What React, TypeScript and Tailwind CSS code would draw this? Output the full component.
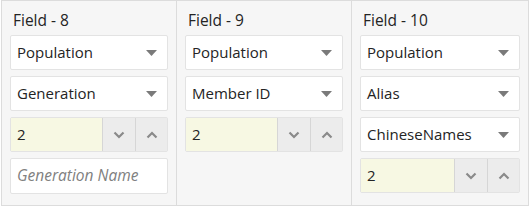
import { ReactNode } from 'react';

const font = { fontFamily: '"Open Sans", "Noto Sans", sans-serif' };

function Caret() {
  return (
    <svg width="11" height="6" viewBox="0 0 11 6" className="shrink-0">
      <path d="M0 0 L11 0 L5.5 6 Z" fill="#7a7a7a" />
    </svg>
  );
}

function Chevron({ up }: { up?: boolean }) {
  return (
    <svg width="12" height="8" viewBox="0 0 12 8">
      <path
        d={up ? 'M1.5 6.5 L6 2 L10.5 6.5' : 'M1.5 1.5 L6 6 L10.5 1.5'}
        fill="none"
        stroke="#8a8a8a"
        strokeWidth="2.2"
      />
    </svg>
  );
}

function Select({ value }: { value: string }) {
  return (
    <div className="h-[35px] flex items-center justify-between bg-white border border-[#e3e3e3] rounded-[2px] pl-[6px] pr-[10px] text-[15px] text-[#242424]">
      <span>{value}</span>
      <Caret />
    </div>
  );
}

function NumberInput({ value }: { value: string }) {
  return (
    <div className="h-[35px] flex border border-[#e3e3e3] rounded-[2px] text-[15px] text-[#242424]">
      <div className="flex-1 flex items-center pl-[6px] bg-[#f7f8e3]">{value}</div>
      <div className="w-[33px] flex items-center justify-center bg-[#ececec] border-l border-[#d6d6d6]">
        <Chevron />
      </div>
      <div className="w-[32px] flex items-center justify-center bg-[#ececec] border-l border-[#d6d6d6]">
        <Chevron up />
      </div>
    </div>
  );
}

function TextInput({ placeholder }: { placeholder: string }) {
  return (
    <div className="h-[36px] flex items-center bg-white border border-[#e3e3e3] rounded-[2px] pl-[6px] text-[15.5px] italic text-[#808080]">
      {placeholder}
    </div>
  );
}

function Column({ title, children, last }: { title: string; children: ReactNode; last?: boolean }) {
  return (
    <div className={`flex flex-col pl-[8px] pr-[8px] ${last ? '' : 'border-r border-[#dcdcdc]'}`}>
      <div className="h-[34px] pt-[9px] pl-[3px] text-[15.5px] text-[#242424] leading-[20px]">{title}</div>
      <div className="flex flex-col gap-[6px]">{children}</div>
    </div>
  );
}

export default function App() {
  return (
    <div style={font} className="w-[529px] h-[207px] bg-white">
      <div className="w-[528px] h-[206px] ml-[1px] bg-[#f6f6f6] border border-[#dcdcdc] grid grid-cols-[175px_175px_176px]">
        <Column title="Field - 8">
          <Select value="Population" />
          <Select value="Generation" />
          <NumberInput value="2" />
          <TextInput placeholder="Generation Name" />
        </Column>
        <Column title="Field - 9">
          <Select value="Population" />
          <Select value="Member ID" />
          <NumberInput value="2" />
        </Column>
        <Column title="Field - 10" last>
          <Select value="Population" />
          <Select value="Alias" />
          <Select value="ChineseNames" />
          <NumberInput value="2" />
        </Column>
      </div>
    </div>
  );
}
